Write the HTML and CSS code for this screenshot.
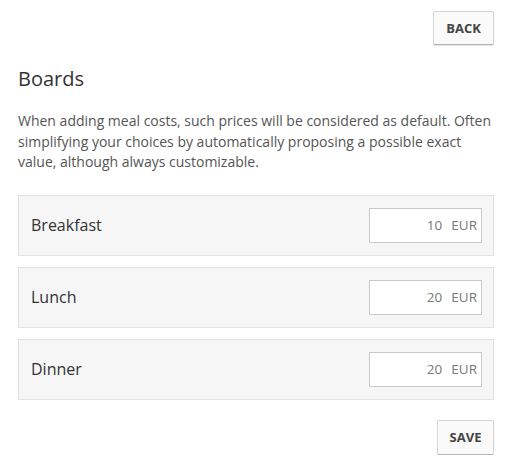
FILE: index.html
```html
<!DOCTYPE html>
<html>
<head>
<meta charset="utf-8">
<link rel="stylesheet" href="styles.css">
</head>
<body>
<div class="page">
  <div class="top">
    <button class="btn">BACK</button>
  </div>
  <h1 class="title">Boards</h1>
  <p class="desc">When adding meal costs, such prices will be considered as default. Often simplifying your choices by automatically proposing a possible exact value, although always customizable.</p>
  <div class="list">
    <div class="row">
      <span class="label">Breakfast</span>
      <div class="price"><span class="num">10</span><span class="cur">EUR</span></div>
    </div>
    <div class="row">
      <span class="label">Lunch</span>
      <div class="price"><span class="num">20</span><span class="cur">EUR</span></div>
    </div>
    <div class="row">
      <span class="label">Dinner</span>
      <div class="price"><span class="num">20</span><span class="cur">EUR</span></div>
    </div>
  </div>
  <div class="bottom">
    <button class="btn save">SAVE</button>
  </div>
</div>
</body>
</html>
```

FILE: styles.css
```css
* { box-sizing: border-box; }
html, body { margin: 0; padding: 0; background: #fff; }
body { font-family: "Open Sans", "Liberation Sans", sans-serif; color: #333; }
.page { padding: 11px 13px 0 18px; }
.top, .bottom { display: flex; justify-content: flex-end; }
.btn {
  font-family: "Open Sans", "Liberation Sans", sans-serif;
  font-weight: 700;
  font-size: 13px;
  color: #444;
  background: #fafafa;
  border: 1px solid #d6d6d6;
  border-bottom-color: #b5b5b5;
  border-radius: 2px;
  box-shadow: 0 1px 1px rgba(0,0,0,0.12);
  height: 34px;
  width: 61px;
  padding: 0;
}
.save { width: 57px; height: 35px; }
.title { font-size: 20px; font-weight: 400; margin: 20px 0 0 0; line-height: 28px; color: #333; }
.desc { font-size: 14px; line-height: 20.5px; color: #555; margin: 18px 0 0 0; }
.list { display: flex; flex-direction: column; gap: 11px; margin-top: 22px; }
.row {
  display: flex; align-items: center; justify-content: space-between;
  height: 61px;
  background: #f6f6f6;
  border: 1px solid #e2e2e2;
  padding: 0 11px 0 12px;
}
.label { font-size: 16px; color: #333; }
.price {
  width: 113px; height: 35px;
  background: #fff;
  border: 1px solid #c9c9c9;
  display: flex; align-items: center; justify-content: flex-end;
  padding-right: 4px;
  font-size: 13.5px; color: #777;
}
.num { margin-right: 9px; }
.bottom { margin-top: 20px; }
```
